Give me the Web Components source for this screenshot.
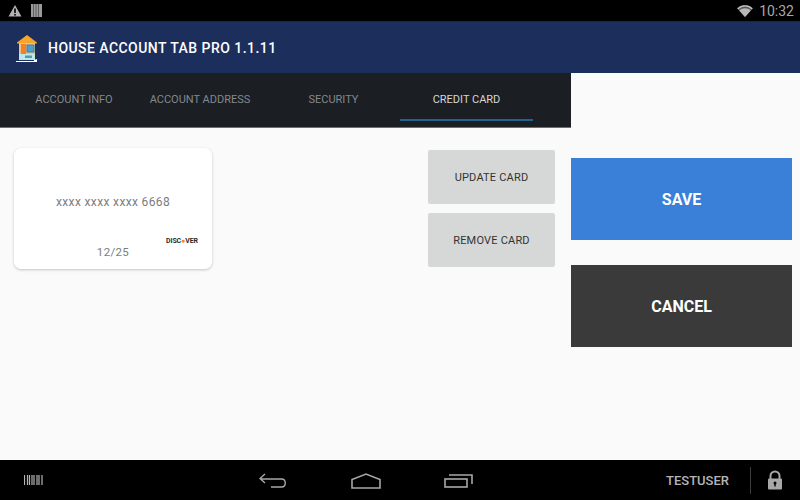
<!DOCTYPE html>
<html>
<head>
<meta charset="utf-8">
<style>
    html, body { margin: 0; height: 100%; overflow: hidden; }
    body { font-family: Roboto, "Liberation Sans", sans-serif; background: #fafafa; }
</style>
</head>
<body>
<app-shell>
    <status-bar slot="status"></status-bar>
    <app-header slot="header" title="HOUSE ACCOUNT TAB PRO 1.1.11"></app-header>
    <account-tabs slot="tabs">
        <tab-item style="width:137px;padding-left:9px">ACCOUNT INFO</tab-item>
        <tab-item style="width:134px;margin-left:-5px">ACCOUNT ADDRESS</tab-item>
        <tab-item style="width:133px">SECURITY</tab-item>
        <tab-item active style="width:133px">CREDIT CARD</tab-item>
    </account-tabs>
    <credit-card slot="main" number="xxxx xxxx xxxx 6668" expiry="12/25"></credit-card>
    <div slot="main" style="display:flex;flex-direction:column;gap:9px;margin-top:2px">
        <card-button>UPDATE CARD</card-button>
        <card-button>REMOVE CARD</card-button>
    </div>
    <action-button slot="side" style="--bg:#3a7fd8">SAVE</action-button>
    <action-button slot="side" style="--bg:#3a3a3a">CANCEL</action-button>
    <nav-bar slot="nav" user="TESTUSER"></nav-bar>
</app-shell>

<script>
// Marco general de la pagina
class AppShell extends HTMLElement {
    constructor() {
        super();
        this.attachShadow({ mode: 'open' });
    }
    connectedCallback() {
        this.shadowRoot.innerHTML = `
            <style>
                :host { display: flex; flex-direction: column; width: 800px; height: 500px; }
                .content { flex: 1; display: flex; min-height: 0; }
                .left { width: 571px; display: flex; flex-direction: column; }
                .main { display: flex; justify-content: space-between; padding: 20px 16px 0 14px; }
                .side { width: 221px; display: flex; flex-direction: column; gap: 25px; padding-top: 85px; }
            </style>
            <slot name="status"></slot>
            <slot name="header"></slot>
            <div class="content">
                <div class="left">
                    <slot name="tabs"></slot>
                    <div class="main"><slot name="main"></slot></div>
                </div>
                <div class="side"><slot name="side"></slot></div>
            </div>
            <slot name="nav"></slot>
        `;
    }
}

class StatusBar extends HTMLElement {
    constructor() {
        super();
        this.attachShadow({ mode: 'open' });
    }
    connectedCallback() {
        this.shadowRoot.innerHTML = `
            <style>
                :host { display: flex; align-items: center; height: 21px; background: #000; padding: 0 6px 0 8px; box-sizing: border-box; color: #a6a6a6; }
                svg { display: block; }
                .warn { margin-right: 9px; }
                .time { font-size: 14px; margin-left: 6px; color: #a8a8a8; }
                .space { flex: 1; }
            </style>
            <svg class="warn" width="14" height="13" viewBox="0 0 14 13">
                <path d="M7 1L13.5 12.5H.5z" fill="#b4b4b4"/>
                <rect x="6.2" y="4.5" width="1.6" height="4.5" fill="#000"/>
                <rect x="6.2" y="10" width="1.6" height="1.6" fill="#000"/>
            </svg>
            <svg width="11" height="13" viewBox="0 0 11 13">
                <rect width="11" height="13" fill="#9a9a9a"/>
                <path d="M2.5 0v13M5 0v13M7.5 0v13" stroke="#5c5c5c" stroke-width="1"/>
            </svg>
            <span class="space"></span>
            <svg width="16" height="12" viewBox="0 0 16 12">
                <path d="M0 3.2C4.5-1 11.5-1 16 3.2L8 12z" fill="#555"/>
                <path d="M2.2 5.6C5.5 2.6 10.5 2.6 13.8 5.6L8 12z" fill="#b8b8b8"/>
                <path d="M.8 4C5-.2 11-.2 15.2 4" fill="none" stroke="#c4c4c4" stroke-width="1.2"/>
            </svg>
            <span class="time">10:32</span>
        `;
    }
}

class AppHeader extends HTMLElement {
    constructor() {
        super();
        this.attachShadow({ mode: 'open' });
    }
    connectedCallback() {
        this.shadowRoot.innerHTML = `
            <style>
                :host { display: flex; align-items: center; height: 52px; background: #1c2e5c; border-top: 1px solid #18264a; box-sizing: border-box; padding-left: 16px; }
                svg { display: block; margin-right: 10px; margin-top: 1px; }
                h1 { margin: 0; font-size: 14px; font-weight: 500; color: #fff; letter-spacing: .45px; }
            </style>
            <svg width="22" height="28" viewBox="0 0 22 28">
                <path d="M1 8.5L11 1l10 7.5v1H1z" fill="#f8a52c"/>
                <rect x="3" y="9" width="16" height="16" fill="#f3c27a"/>
                <rect x="5" y="10" width="5" height="11" fill="#f57f2a"/>
                <rect x="11" y="11" width="7" height="7" fill="#4f9fd0" stroke="#3d7ea8"/>
                <rect x="3" y="20" width="16" height="6" fill="#bfe6ea"/>
                <rect x="9" y="21.5" width="7" height="2.5" fill="#4f9fa8"/>
                <path d="M0 27h18v-1l3-1v3H0z" fill="#fff"/>
            </svg>
            <h1>${this.getAttribute('title')}</h1>
        `;
    }
}

class AccountTabs extends HTMLElement {
    constructor() {
        super();
        this.attachShadow({ mode: 'open' });
    }
    connectedCallback() {
        this.shadowRoot.innerHTML = `
            <style>
                :host { display: flex; height: 55px; background: #1b1e23; border-bottom: 1px solid #6e6e6e; box-sizing: border-box; padding-left: 1px; }
            </style>
            <slot></slot>
        `;
    }
}

class TabItem extends HTMLElement {
    constructor() {
        super();
        this.attachShadow({ mode: 'open' });
    }
    connectedCallback() {
        this.shadowRoot.innerHTML = `
            <style>
                :host { display: flex; align-items: center; justify-content: center; box-sizing: border-box; font-size: 11px; color: #85888b; position: relative; padding-bottom: 1px; }
                :host([active]) { color: #d6d6d6; }
                :host([active])::after { content: ""; position: absolute; left: 0; right: 0; bottom: 6px; height: 2px; background: #1c648f; }
            </style>
            <slot></slot>
        `;
    }
}

class CreditCard extends HTMLElement {
    constructor() {
        super();
        this.attachShadow({ mode: 'open' });
    }
    connectedCallback() {
        this.shadowRoot.innerHTML = `
            <style>
                :host { display: block; width: 198px; height: 121px; background: #fff; border-radius: 7px; box-shadow: 0 1px 3px rgba(0,0,0,.22); position: relative; color: #7d7d7d; font-size: 12px; text-align: center; letter-spacing: .35px; }
                .number { padding-top: 47px; line-height: 15px; }
                .expiry { position: absolute; left: 0; right: 0; top: 97px; line-height: 15px; font-size: 11.5px; }
                .brand { position: absolute; left: 152px; top: 88px; font-size: 7px; font-weight: 700; color: #2a2a2a; letter-spacing: -.1px; line-height: 10px; white-space: nowrap; }
                .brand i { color: #f58220; font-style: normal; }
            </style>
            <div class="number">${this.getAttribute('number')}</div>
            <div class="brand">DISC<i>●</i>VER</div>
            <div class="expiry">${this.getAttribute('expiry')}</div>
        `;
    }
}

class CardButton extends HTMLElement {
    constructor() {
        super();
        this.attachShadow({ mode: 'open' });
    }
    connectedCallback() {
        this.shadowRoot.innerHTML = `
            <style>
                :host { display: flex; align-items: center; justify-content: center; width: 127px; height: 54px; background: #d6d8d7; border-radius: 2px; font-size: 11px; color: #333; letter-spacing: .2px; }
            </style>
            <slot></slot>
        `;
    }
}

class ActionButton extends HTMLElement {
    constructor() {
        super();
        this.attachShadow({ mode: 'open' });
    }
    connectedCallback() {
        this.shadowRoot.innerHTML = `
            <style>
                :host { display: flex; align-items: center; justify-content: center; width: 221px; height: 82px; background: var(--bg); color: #fff; font-size: 16px; font-weight: 700; }
            </style>
            <slot></slot>
        `;
    }
}

class NavBar extends HTMLElement {
    constructor() {
        super();
        this.attachShadow({ mode: 'open' });
    }
    connectedCallback() {
        this.shadowRoot.innerHTML = `
            <style>
                :host { display: flex; align-items: center; height: 40px; background: #000; position: relative; color: #b5b5b5; }
                svg { display: block; }
                .barcode { margin-left: 24px; }
                .keys { position: absolute; left: 259px; top: 13px; display: flex; align-items: flex-start; gap: 64px; }
                .user { margin-left: auto; font-size: 13px; font-weight: 500; margin-right: 21px; }
                .sep { width: 1px; height: 27px; background: #3c3c3c; margin-right: 16px; }
                .lock { margin-right: 17px; }
            </style>
            <svg class="barcode" width="19" height="10" viewBox="0 0 19 10">
                <path d="M.5 0v10M3.5 0v10M5.5 0v10M8 0v10M10 0v10M13 0v10M15 0v10M18 0v10" stroke="#b5b5b5" stroke-width="1.2"/>
            </svg>
            <div class="keys">
                <svg width="28" height="15" viewBox="0 0 28 15" fill="none" stroke="#a8a8a8" stroke-width="1.4">
                    <path d="M6 1L1 5.5 6 10M1 6h21.5c5 0 5 8 0 8H12"/>
                </svg>
                <svg width="30" height="16" viewBox="0 0 30 16" fill="none" stroke="#a8a8a8" stroke-width="1.6">
                    <path d="M1 15V6.5L15 1l14 5.5V15z"/>
                </svg>
                <svg width="29" height="15" viewBox="0 0 29 15" fill="none" stroke="#a8a8a8" stroke-width="1.6" style="margin-left:-1px">
                    <rect x="1" y="6" width="22" height="8"/>
                    <path d="M5 2h23v9"/>
                </svg>
            </div>
            <span class="user">${this.getAttribute('user')}</span>
            <span class="sep"></span>
            <svg class="lock" width="16" height="20" viewBox="0 0 16 20">
                <path d="M3.5 9V6a4.5 4.5 0 0 1 9 0v3" fill="none" stroke="#a8a8a8" stroke-width="2"/>
                <rect x="1" y="8.5" width="14" height="11" rx="1" fill="#a8a8a8"/>
                <circle cx="8" cy="13" r="1.5" fill="#000"/>
                <rect x="7.3" y="13" width="1.4" height="3.5" fill="#000"/>
            </svg>
        `;
    }
}

customElements.define('app-shell', AppShell);
customElements.define('status-bar', StatusBar);
customElements.define('app-header', AppHeader);
customElements.define('account-tabs', AccountTabs);
customElements.define('tab-item', TabItem);
customElements.define('credit-card', CreditCard);
customElements.define('card-button', CardButton);
customElements.define('action-button', ActionButton);
customElements.define('nav-bar', NavBar);
</script>
</body>
</html>
